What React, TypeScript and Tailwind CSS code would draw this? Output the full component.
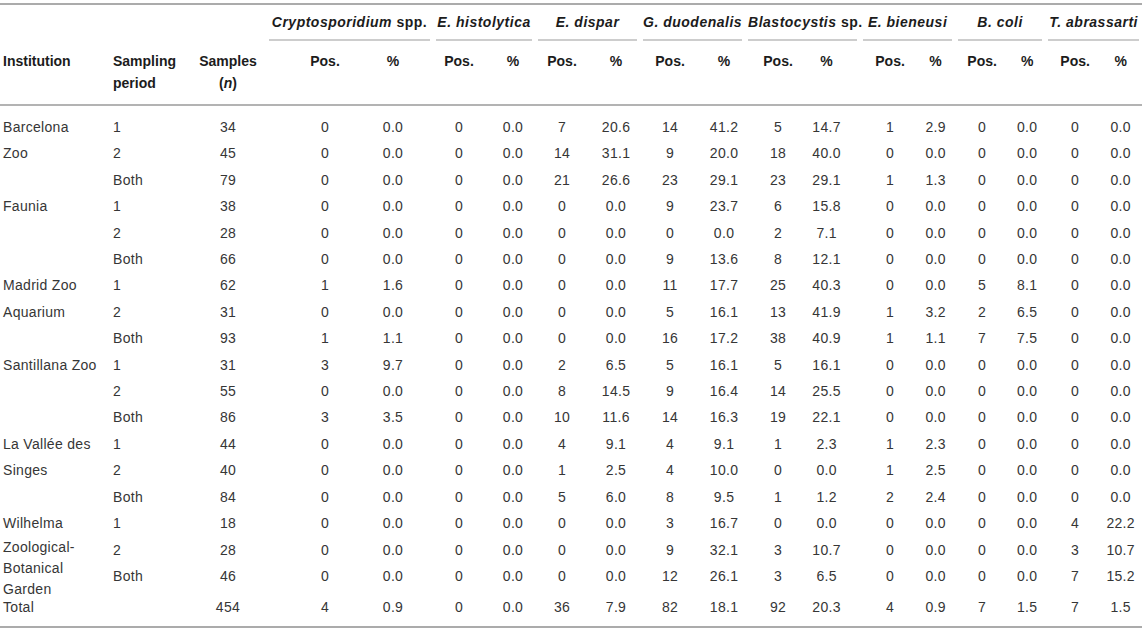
const groups = [
  { name: "Cryptosporidium", suffix: " spp." },
  { name: "E. histolytica" },
  { name: "E. dispar" },
  { name: "G. duodenalis" },
  { name: "Blastocystis", suffix: " sp." },
  { name: "E. bieneusi" },
  { name: "B. coli" },
  { name: "T. abrassarti" },
]

// horizontal nudge for the 16 Pos./% columns
const valueCols = [
  "pl-[25px]",
  "pr-[6px]",
  "",
  "pl-[6px]",
  "",
  "pl-[3px]",
  "",
  "pl-[3px]",
  "",
  "pr-[18px]",
  "",
  "pr-[4px]",
  "",
  "",
  "",
  "pr-[6px]",
]

const colWidths = [
  "w-[110px]",
  "w-[80px]",
  "w-[76px]",
  "w-[93px]",
  "w-[74px]",
  "w-[52px]",
  "w-[50px]",
  "w-[54px]",
  "w-[51px]",
  "w-[60px]",
  "w-[45px]",
  "w-[66px]",
  "w-[49px]",
  "w-[60px]",
  "w-[35px]",
  "w-[54px]",
  "w-[36px]",
  "w-[60px]",
  "w-[37px]",
]

type Row = { inst?: string; period: string; n: string; v: string }

const rows: Row[] = [
  { inst: "Barcelona", period: "1", n: "34", v: "0 0.0 0 0.0 7 20.6 14 41.2 5 14.7 1 2.9 0 0.0 0 0.0" },
  { inst: "Zoo", period: "2", n: "45", v: "0 0.0 0 0.0 14 31.1 9 20.0 18 40.0 0 0.0 0 0.0 0 0.0" },
  { period: "Both", n: "79", v: "0 0.0 0 0.0 21 26.6 23 29.1 23 29.1 1 1.3 0 0.0 0 0.0" },
  { inst: "Faunia", period: "1", n: "38", v: "0 0.0 0 0.0 0 0.0 9 23.7 6 15.8 0 0.0 0 0.0 0 0.0" },
  { period: "2", n: "28", v: "0 0.0 0 0.0 0 0.0 0 0.0 2 7.1 0 0.0 0 0.0 0 0.0" },
  { period: "Both", n: "66", v: "0 0.0 0 0.0 0 0.0 9 13.6 8 12.1 0 0.0 0 0.0 0 0.0" },
  { inst: "Madrid Zoo", period: "1", n: "62", v: "1 1.6 0 0.0 0 0.0 11 17.7 25 40.3 0 0.0 5 8.1 0 0.0" },
  { inst: "Aquarium", period: "2", n: "31", v: "0 0.0 0 0.0 0 0.0 5 16.1 13 41.9 1 3.2 2 6.5 0 0.0" },
  { period: "Both", n: "93", v: "1 1.1 0 0.0 0 0.0 16 17.2 38 40.9 1 1.1 7 7.5 0 0.0" },
  { inst: "Santillana Zoo", period: "1", n: "31", v: "3 9.7 0 0.0 2 6.5 5 16.1 5 16.1 0 0.0 0 0.0 0 0.0" },
  { period: "2", n: "55", v: "0 0.0 0 0.0 8 14.5 9 16.4 14 25.5 0 0.0 0 0.0 0 0.0" },
  { period: "Both", n: "86", v: "3 3.5 0 0.0 10 11.6 14 16.3 19 22.1 0 0.0 0 0.0 0 0.0" },
  { inst: "La Vallée des", period: "1", n: "44", v: "0 0.0 0 0.0 4 9.1 4 9.1 1 2.3 1 2.3 0 0.0 0 0.0" },
  { inst: "Singes", period: "2", n: "40", v: "0 0.0 0 0.0 1 2.5 4 10.0 0 0.0 1 2.5 0 0.0 0 0.0" },
  { period: "Both", n: "84", v: "0 0.0 0 0.0 5 6.0 8 9.5 1 1.2 2 2.4 0 0.0 0 0.0" },
  { inst: "Wilhelma", period: "1", n: "18", v: "0 0.0 0 0.0 0 0.0 3 16.7 0 0.0 0 0.0 0 0.0 4 22.2" },
  { inst: "wzbg", period: "2", n: "28", v: "0 0.0 0 0.0 0 0.0 9 32.1 3 10.7 0 0.0 0 0.0 3 10.7" },
  { period: "Both", n: "46", v: "0 0.0 0 0.0 0 0.0 12 26.1 3 6.5 0 0.0 0 0.0 7 15.2" },
]

const total: Row = { inst: "Total", period: "", n: "454", v: "4 0.9 0 0.0 36 7.9 82 18.1 92 20.3 4 0.9 7 1.5 7 1.5" }

function DataRow({ row, cell }: { row: Row; cell: string }) {
  return (
    <tr>
      <td className={`${cell} pl-[3px] text-left whitespace-nowrap`}>
        {row.inst === "wzbg" ? (
          <div className="-mt-[8px] h-[18px] leading-[21px]">
            Zoological-
            <br />
            Botanical
            <br />
            Garden
          </div>
        ) : (
          row.inst
        )}
      </td>
      <td className={`${cell} pl-[3px] text-left`}>{row.period}</td>
      <td className={`${cell} text-center`}>{row.n}</td>
      {row.v.split(" ").map((val, i) => (
        <td key={i} className={`${cell} ${valueCols[i]} text-center`}>
          {val}
        </td>
      ))}
    </tr>
  )
}

export default function App() {
  return (
    <div
      className="min-h-[633px] w-[1145px] bg-white pt-[3px]"
      style={{ fontFamily: '"Liberation Sans", Arial, sans-serif' }}
    >
      <table className="w-[1142px] table-fixed border-collapse text-[14px]">
        <colgroup>
          {colWidths.map((w, i) => (
            <col key={i} className={w} />
          ))}
        </colgroup>
        <thead className="font-bold text-[#1c1c1c]">
          <tr className="border-t-2 border-[#ababab]">
            <th />
            <th />
            <th />
            {groups.map((g) => (
              <th key={g.name} colSpan={2} className="px-[3px] pt-[8px] align-top font-bold">
                <div className="border-b-2 border-[#cdcdcd] pb-[8px] leading-[18px] tracking-[0.5px] whitespace-nowrap">
                  <span className="italic">{g.name}</span>
                  {g.suffix}
                </div>
              </th>
            ))}
          </tr>
          <tr className="border-b-2 border-[#b3b3b3]">
            <th className="pt-[9px] pb-[10px] pl-[3px] text-left align-top leading-[22px]">Institution</th>
            <th className="pt-[9px] pb-[10px] pl-[3px] text-left align-top leading-[22px]">
              Sampling
              <br />
              period
            </th>
            <th className="pt-[9px] pb-[10px] text-center align-top leading-[22px]">
              Samples
              <br />(<span className="italic">n</span>)
            </th>
            {valueCols.map((pad, i) => (
              <th key={i} className={`${pad} pt-[9px] pb-[10px] text-center align-top leading-[22px]`}>
                {i % 2 === 0 ? "Pos." : "%"}
              </th>
            ))}
          </tr>
        </thead>
        <tbody className="tracking-[0.3px] text-[#363636]">
          {rows.map((r, i) => (
            <DataRow
              key={i}
              row={r}
              cell={i === 0 ? "pt-[12px] pb-[4px] leading-[18.4px]" : "py-[4px] leading-[18.4px]"}
            />
          ))}
        </tbody>
        <tfoot className="border-b-2 border-[#ababab] tracking-[0.3px] text-[#363636]">
          <DataRow row={total} cell="pt-[9px] pb-[9px] leading-[18.4px]" />
        </tfoot>
      </table>
    </div>
  )
}
